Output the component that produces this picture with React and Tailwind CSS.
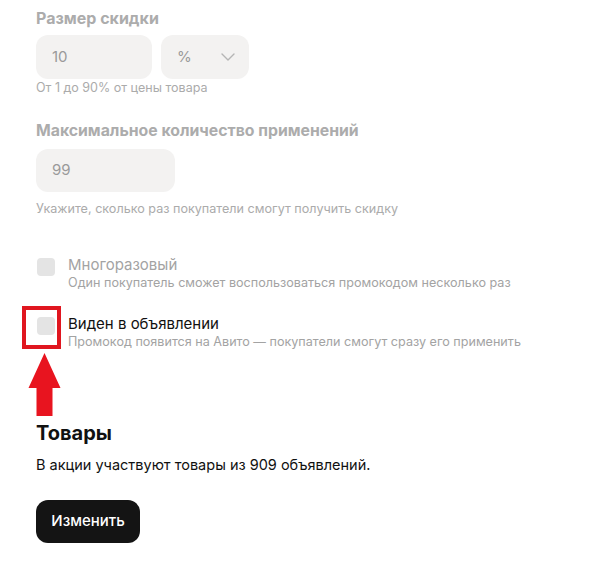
import React from 'react';

const Chevron = () => (
  <svg width="16" height="10" viewBox="0 0 16 10" fill="none">
    <path d="M2 2l6 6 6-6" stroke="#b5b5b5" strokeWidth="1.4" strokeLinecap="round" strokeLinejoin="round" />
  </svg>
);

const Option = ({ title, text, active }) => (
  <div className="flex items-start gap-[13px]">
    <div className="mt-[2px] ml-[1px] h-[18px] w-[18px] shrink-0 rounded-[4px] bg-[#e4e4e4]" />
    <div>
      <p className={`text-[15px] leading-[18px] ${active ? 'text-[#111]' : 'text-[#a3a3a3]'}`}>{title}</p>
      <p className="text-[12.6px] leading-[18px] text-[#a3a3a3]">{text}</p>
    </div>
  </div>
);

export default function App() {
  return (
    <div
      className="relative min-h-[582px] w-[604px] bg-white pl-9 pt-[6px]"
      style={{ fontFamily: 'Inter, "Noto Sans", sans-serif' }}
    >
      {/* Размер скидки */}
      <h3 className="text-[16px] font-bold leading-6 text-[#acacac]">Размер скидки</h3>
      <div className="mt-[5px] flex gap-[9px]">
        <div className="flex h-[44px] w-[116px] items-center rounded-[12px] bg-[#f3f2f1] px-4 text-[15px] text-[#9a9a9a]">10</div>
        <div className="flex h-[44px] w-[88px] items-center justify-between rounded-[12px] bg-[#f3f2f1] pl-4 pr-[13px] text-[15px] text-[#9a9a9a]">
          <span>%</span>
          <Chevron />
        </div>
      </div>
      <p className="mt-[1px] text-[12.5px] leading-4 text-[#ababab]">От 1 до 90% от цены товара</p>

      {/* Максимальное количество */}
      <h3 className="mt-[23px] text-[15.8px] font-bold leading-6 text-[#acacac]">Максимальное количество применений</h3>
      <div className="mt-[6px] flex h-[43px] w-[139px] items-center rounded-[12px] bg-[#f3f2f1] px-4 text-[15px] text-[#9a9a9a]">99</div>
      <p className="mt-[9px] text-[12.6px] leading-4 text-[#ababab]">Укажите, сколько раз покупатели смогут получить скидку</p>

      {/* Чекбоксы */}
      <div className="mt-[39px] flex flex-col gap-[23px]">
        <Option title="Многоразовый" text="Один покупатель сможет воспользоваться промокодом несколько раз" />
        <Option title="Виден в объявлении" text="Промокод появится на Авито — покупатели смогут сразу его применить" active />
      </div>

      {/* Товары */}
      <h2 className="mt-[68px] text-[20px] font-bold leading-7 text-[#111]">Товары</h2>
      <p className="mt-[8px] text-[14.5px] leading-5 text-[#111]">В акции участвуют товары из 909 объявлений.</p>
      <button className="mt-[25px] h-[43px] w-[104px] rounded-[12px] bg-[#141414] text-[15px] font-medium text-white">
        Изменить
      </button>

      {/* Аннотация */}
      <div className="absolute left-[22px] top-[306px] h-[43px] w-[39px] border-[4px] border-[#e0161f]" />
      <svg className="absolute left-[28px] top-[353px]" width="33" height="64" viewBox="0 0 33 64">
        <path d="M16.5 0L32.5 35H24.5V63H8.5V35H0.5Z" fill="#e8141f" />
      </svg>
    </div>
  );
}
